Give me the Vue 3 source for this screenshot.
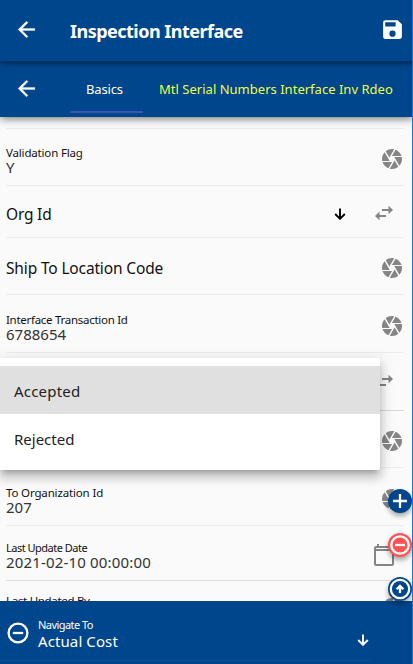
<script setup>
const rows = [
  { label: 'Validation Flag', value: 'Y', icon: 'shutter', cls: 'r1', lc: 'w-validation', vc: '' },
  { single: 'Org Id', icon: 'swap', arrow: true, cls: 'r2', lc: 'w-org' },
  { single: 'Ship To Location Code', icon: 'shutter', cls: 'r3', lc: 'w-ship' },
  { label: 'Interface Transaction Id', value: '6788654', icon: 'shutter', cls: 'r4', lc: 'w-trans', vc: 'w-num' },
  { icon: 'swap', cls: 'r5' },
  { icon: 'shutter', cls: 'r6' },
  { label: 'To Organization Id', value: '207', icon: 'shutter', cls: 'r7', lc: 'w-toorg', vc: 'w-num' },
  { label: 'Last Update Date', value: '2021-02-10 00:00:00', icon: 'calendar', cls: 'r8', lc: 'w-date', vc: 'w-stamp' },
  { label: 'Last Updated By', value: '', icon: 'shutter', cls: 'r9', lc: 'w-by', vc: '' },
]
</script>

<template>
  <div class="screen">
    <header class="bar title-bar">
      <svg class="back" viewBox="0 0 24 24"><path d="M20 11H7.8l5.6-5.6L12 4l-8 8 8 8 1.4-1.4L7.8 13H20z" /></svg>
      <h1><span>Inspection Interface</span></h1>
      <svg class="save" viewBox="0 0 24 24"><path d="M17 3H5a2 2 0 0 0-2 2v14c0 1.100.9 2 2 2h14c1.100 0 2-.9 2-2V7zM12 19a3 3 0 1 1 0-6 3 3 0 0 1 0 6zM15 9H5V5h10z" /></svg>
    </header>
    <nav class="bar tab-bar">
      <svg class="back" viewBox="0 0 24 24"><path d="M20 11H7.8l5.6-5.6L12 4l-8 8 8 8 1.4-1.4L7.8 13H20z" /></svg>
      <div class="tab active"><span class="w-basics">Basics</span></div>
      <div class="tab other"><span class="w-mtl">Mtl Serial Numbers Interface Inv Rdeo</span></div>
    </nav>

    <main class="form">
      <div class="row r0"></div>
      <div v-for="r in rows" :key="r.cls" class="row" :class="r.cls">
        <div class="text">
          <div v-if="r.single" class="single"><span :class="r.lc">{{ r.single }}</span></div>
          <template v-else-if="r.label">
            <div class="label"><span :class="r.lc">{{ r.label }}</span></div>
            <div class="value"><span :class="r.vc">{{ r.value }}</span></div>
          </template>
        </div>
        <svg v-if="r.arrow" class="down" viewBox="0 0 12 12"><path d="M6 .5v10M1.2 6 6 10.8 10.8 6" /></svg>
        <svg v-if="r.icon === 'shutter'" class="icon shutter" viewBox="0 0 24 24"><path d="M9.4 10.5l4.77-8.26C13.47 2.09 12.75 2 12 2c-2.4 0-4.6.85-6.32 2.25l3.66 6.35.06-.1zM21.54 9c-.92-2.92-3.15-5.26-6-6.34L11.88 9h9.66zm.26 1h-7.49l.29.5 4.76 8.25C21 16.97 22 14.61 22 12c0-.69-.07-1.35-.2-2zM8.54 12l-3.9-6.75C3.01 7.03 2 9.39 2 12c0 .69.07 1.35.2 2h7.49l-1.15-2zm-6.08 3c.92 2.92 3.15 5.26 6 6.34L12.12 15H2.46zm11.27 0l-3.9 6.76c.7.15 1.42.24 2.17.24 2.4 0 4.6-.85 6.32-2.25l-3.66-6.35-.93 1.6z" /></svg>
        <svg v-else-if="r.icon === 'swap'" class="icon swap" viewBox="0 0 24 24"><path d="M7.5 10.5L3 15l4.5 4.2V16H14v-2H7.500zM21 9l-4.500-4.200V8H10v2h6.500v3.200z" /></svg>
        <svg v-else class="icon calendar" viewBox="0 0 24 24"><path d="M20 3h-1V1h-2v2H7V1H5v2H4c-1.1 0-2 .9-2 2v16c0 1.1.9 2 2 2h16c1.1 0 2-.9 2-2V5c0-1.1-.9-2-2-2zm0 18H4V8h16v13zm0-15H4V5h16z" /></svg>
      </div>
    </main>

    <footer class="bottom">
      <svg class="minus" viewBox="0 0 22 22"><circle cx="11" cy="11" r="9.4" /><path d="M5.800 11h10.400" /></svg>
      <div class="nav-text">
        <div class="nav-label"><span class="w-nav">Navigate To</span></div>
        <div class="nav-value"><span class="w-cost">Actual Cost</span></div>
      </div>
      <svg class="down nav-down" viewBox="0 0 12 12"><path d="M6 .5v10M1.2 6 6 10.8 10.8 6" /></svg>
    </footer>

    <div class="menu">
      <div class="option selected"><span class="w-acc">Accepted</span></div>
      <div class="option"><span class="w-rej">Rejected</span></div>
    </div>

    <div class="fab add"><svg viewBox="0 0 24 24"><path d="M12 5v14M5 12h14" /></svg></div>
    <div class="fab remove"><svg viewBox="0 0 24 24"><circle cx="12" cy="12" r="8.7" /><path d="M7 12h10" /></svg></div>
    <div class="fab up"><svg viewBox="0 0 24 24"><circle cx="12" cy="12" r="9.2" /><path d="M12 16V9M8.600 12.200 12 8.800l3.400 3.400" /></svg></div>
    <div class="edge"></div>
  </div>
</template>

<style>
body { margin: 0; overflow: hidden; }
</style>

<style scoped>
.screen {
  position: relative;
  display: flex;
  flex-direction: column;
  width: 413px;
  height: 664px;
  overflow: hidden;
  background: #fafafa;
  color: #111;
  font-family: "Noto Sans", "Open Sans", sans-serif;
}
span { white-space: nowrap; }
svg { display: block; flex: none; }
.bar {
  display: flex;
  box-sizing: border-box;
  flex: none;
  background: #00468c;
  color: #fff;
}
.title-bar {
  position: relative;
  z-index: 3;
  height: 61px;
  align-items: center;
  padding: 0 9px 3px 14px;
  box-shadow: 0 2px 6px rgba(0, 0, 0, .5);
}
.back { width: 25px; height: 25px; fill: #fff; stroke: #fff; stroke-width: .3; }
h1 { flex: 1; margin: 0 0 0 31px; font-size: 18px; line-height: 24px; padding-top: 3px; letter-spacing: -.52px; }
.save { width: 25px; height: 25px; fill: #fff; margin-right: -1px; }
.tab-bar {
  position: relative;
  z-index: 2;
  height: 56px;
  align-items: flex-start;
  padding-left: 14px;
  box-shadow: 0 2px 8px rgba(0, 0, 0, .5);
}
.tab-bar .back { margin-top: 15px; }
.tab { box-sizing: border-box; height: 56px; padding-top: 19px; font-size: 13px; line-height: 18px; }
.active { width: 73px; margin-left: 31px; padding-left: 16px; height: 52px; border-bottom: 2px solid #3f51b5; }
.other { margin-left: 16px; color: #eeff41; }
.w-basics { letter-spacing: -.15px; }
.w-mtl { letter-spacing: .02px; }

.form { flex: 1; min-height: 0; overflow: hidden; padding: 0 9px 0 6px; }
.row {
  box-sizing: border-box;
  display: flex;
  align-items: flex-start;
  border-bottom: 1px solid #ececec;
}
.text { flex: 1; }
.label { font-size: 11.5px; line-height: 16px; height: 16px; color: #111; }
.value { font-size: 15px; line-height: 14px; height: 14px; margin-top: -1px; color: #333; }
.single { font-size: 15.5px; line-height: 20px; }
.w-validation { letter-spacing: -.17px; }
.w-trans { letter-spacing: -.28px; }
.w-toorg { letter-spacing: -.15px; }
.w-date { font-size: 11px; letter-spacing: -.5px; }
.w-by { letter-spacing: -.3px; }
.w-org { letter-spacing: -.2px; }
.w-ship { letter-spacing: -.15px; }
.w-stamp { letter-spacing: .17px; }
.icon { width: 24px; height: 24px; fill: #858585; }
.swap { margin-right: 8px; }
.calendar { margin-right: 8px; }
.down { width: 12px; height: 12px; fill: none; stroke: #000; stroke-width: 1.9; }
.r2 .down { margin: 4px 38px 0 0; }
.r2 .swap { margin-left: -12px; }
.r0 { height: 12px; }
.r1 { height: 57px; padding-top: 16px; }
.r1 .icon { margin-top: 2px; }
.r2 { height: 52px; padding-top: 18px; }
.r2 .icon { margin-top: -3px; }
.r3 { height: 57px; padding-top: 20px; }
.r3 .icon { margin-top: -2px; }
.r4 { height: 58px; padding-top: 17px; }
.r4 .icon { margin-top: 2px; }
.r5 { height: 58px; padding-top: 17px; border-bottom-color: #d6d8dd; }
.r6 { height: 57px; padding-top: 18px; }
.r7 { height: 58px; padding-top: 17px; }
.r7 .icon { margin-top: 2px; }
.r8 { height: 55px; padding-top: 14px; border-bottom-color: #ddd; }
.r8 .icon { margin-top: 3px; }
.r9 { height: 58px; padding-top: 12px; }
.r9 .icon { margin-top: 3px; }

.bottom {
  box-sizing: border-box;
  flex: none;
  display: flex;
  height: 63px;
  padding: 16px 44px 0 7px;
  background: #00468c linear-gradient(#0c4f93, #0c4f93) 0 59px / 371px 1px no-repeat;
  color: #fff;
}
.minus { width: 22px; height: 22px; margin: 5px 0 0; fill: none; stroke: #fff; stroke-width: 2.3; }
.nav-text { flex: 1; margin-left: 9px; }
.nav-label { font-size: 11px; line-height: 16px; height: 16px; }
.nav-value { font-size: 15px; line-height: 18px; height: 18px; margin-top: -1px; }
.w-nav { letter-spacing: -.55px; }
.w-cost { letter-spacing: .1px; }
.nav-down { margin-top: 17px; stroke: #fff; }

.menu {
  position: absolute;
  z-index: 5;
  left: 0;
  top: 358px;
  width: 380px;
  height: 112px;
  box-sizing: border-box;
  padding: 8px 0;
  background: #fff;
  border-radius: 0 2px 2px 0;
  box-shadow: 0 5px 5px -3px rgba(0, 0, 0, .2), 0 8px 10px 1px rgba(0, 0, 0, .14), 0 3px 14px 2px rgba(0, 0, 0, .12);
}
.option { height: 48px; line-height: 50px; padding-left: 14px; font-size: 15px; color: #222; }
.selected { background: #e0e0e0; }
.w-acc { letter-spacing: .2px; }

.fab {
  position: absolute;
  z-index: 6;
  left: 388px;
  width: 24px;
  height: 24px;
  border-radius: 50%;
  background: #00468c;
  box-shadow: 0 3px 5px rgba(0, 0, 0, .35);
}
.fab svg { width: 24px; height: 24px; fill: none; stroke: #fff; stroke-width: 2.3; }
.add { top: 489px; }
.remove { top: 533px; background: #ff5252; }
.up { top: 577px; }
.edge { position: absolute; z-index: 9; top: 0; right: 0; width: 1px; height: 664px; background: #1878cf; }
</style>
